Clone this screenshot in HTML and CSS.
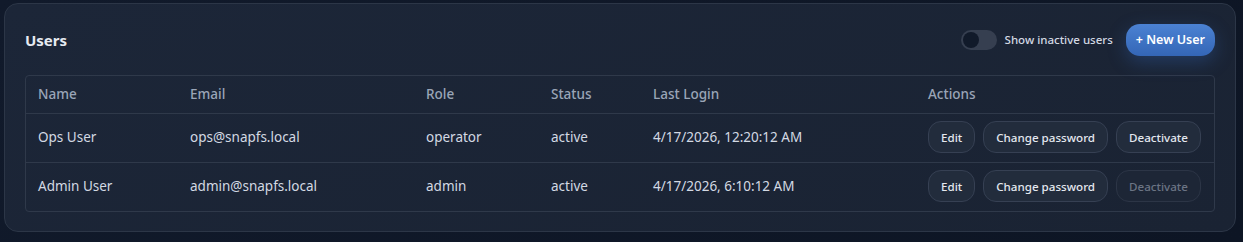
FILE: index.html
```html
<!DOCTYPE html>
<html lang="en">
<head>
    <meta charset="UTF-8">
    <meta name="viewport" content="width=device-width, initial-scale=1.0">
    <title>Users</title>
    <link rel="stylesheet" href="styles.css">
</head>
<body>
<div class="card">
    <div class="card-head">
        <h2 class="title">Users</h2>
        <div class="head-tools">
            <label class="toggle">
                <span class="switch"><span class="knob"></span></span>
                <span class="toggle-label">Show inactive users</span>
            </label>
            <button class="btn-primary">+ New User</button>
        </div>
    </div>

    <div class="table-wrap">
        <table class="users">
            <thead>
                <tr>
                    <th class="c-name">Name</th>
                    <th class="c-email">Email</th>
                    <th class="c-role">Role</th>
                    <th class="c-status">Status</th>
                    <th class="c-login">Last Login</th>
                    <th>Actions</th>
                </tr>
            </thead>
            <tbody>
                <tr>
                    <td>Ops User</td>
                    <td>ops@snapfs.local</td>
                    <td>operator</td>
                    <td>active</td>
                    <td>4/17/2026, 12:20:12 AM</td>
                    <td>
                        <div class="actions">
                            <button class="btn">Edit</button>
                            <button class="btn">Change password</button>
                            <button class="btn">Deactivate</button>
                        </div>
                    </td>
                </tr>
                <tr>
                    <td>Admin User</td>
                    <td>admin@snapfs.local</td>
                    <td>admin</td>
                    <td>active</td>
                    <td>4/17/2026, 6:10:12 AM</td>
                    <td>
                        <div class="actions">
                            <button class="btn">Edit</button>
                            <button class="btn">Change password</button>
                            <button class="btn" disabled>Deactivate</button>
                        </div>
                    </td>
                </tr>
            </tbody>
        </table>
    </div>
</div>
</body>
</html>
```

FILE: styles.css
```css
*{
    margin: 0;
    padding: 0;
    box-sizing: border-box;
}

body{
    background: linear-gradient(135deg, #111a2b 0%, #0d1524 100%);
    font-family: "Noto Sans", "Liberation Sans", sans-serif;
    color: #d3d9e3;
    padding: 3px 7px 10px 4px;
    height: 242px;
    overflow: hidden;
}

.card{
    background: linear-gradient(160deg, #1c2638 0%, #1a2333 100%);
    border: 1px solid #2c3647;
    border-radius: 14px;
    padding: 19px 20px 20px 20px;
    height: 229px;
}

.card-head{
    display: flex;
    align-items: center;
    justify-content: space-between;
    height: 33px;
    margin-bottom: 19px;
}

.title{
    font-size: 15px;
    font-weight: 700;
    color: #e6eaf1;
}

.head-tools{
    display: flex;
    align-items: center;
}

.toggle{
    display: flex;
    align-items: center;
    gap: 8px;
    margin-right: 13px;
}

.switch{
    display: inline-block;
    width: 36px;
    height: 20px;
    border-radius: 10px;
    background: #363f50;
    padding: 2px;
}

.knob{
    display: block;
    width: 16px;
    height: 16px;
    border-radius: 50%;
    background: #111a2a;
}

.toggle-label{
    font-size: 11.5px;
    font-weight: 500;
    color: #d3d9e3;
}

.btn-primary{
    font-family: inherit;
    font-size: 12.5px;
    font-weight: 600;
    color: #fff;
    height: 32px;
    padding: 0 10px;
    border: none;
    border-radius: 14px;
    background: linear-gradient(180deg, #4b82d3 0%, #3466b6 100%);
    box-shadow: 0 6px 18px rgba(52, 102, 182, 0.35);
    white-space: nowrap;
}

.table-wrap{
    border: 1px solid #2f394a;
    border-radius: 4px;
    overflow: hidden;
}

.users{
    width: 100%;
    border-collapse: collapse;
    table-layout: fixed;
    font-size: 13.5px;
}

.users th{
    text-align: left;
    font-weight: 500;
    color: #9aa5b7;
    height: 37px;
    padding: 0 12px;
    border-bottom: 1px solid #2f394a;
}

.users td{
    height: 49px;
    padding: 0 12px 1px;
    color: #d3d9e3;
    border-bottom: 1px solid #2f394a;
    white-space: nowrap;
}

.users tbody tr:last-child td{
    border-bottom: none;
}

.c-name{ width: 152px; }
.c-email{ width: 236px; }
.c-role{ width: 125px; }
.c-status{ width: 102px; }
.c-login{ width: 275px; }

.actions{
    display: flex;
    gap: 8px;
}

.btn{
    font-family: inherit;
    font-size: 11.6px;
    font-weight: 500;
    color: #e4e8ef;
    height: 32px;
    padding: 0 12px;
    background: #222c3c;
    border: 1px solid #364053;
    border-radius: 13px;
    white-space: nowrap;
}

.btn:disabled{
    color: #6b7484;
    background: #1d2636;
    border-color: #2c3546;
}
```
